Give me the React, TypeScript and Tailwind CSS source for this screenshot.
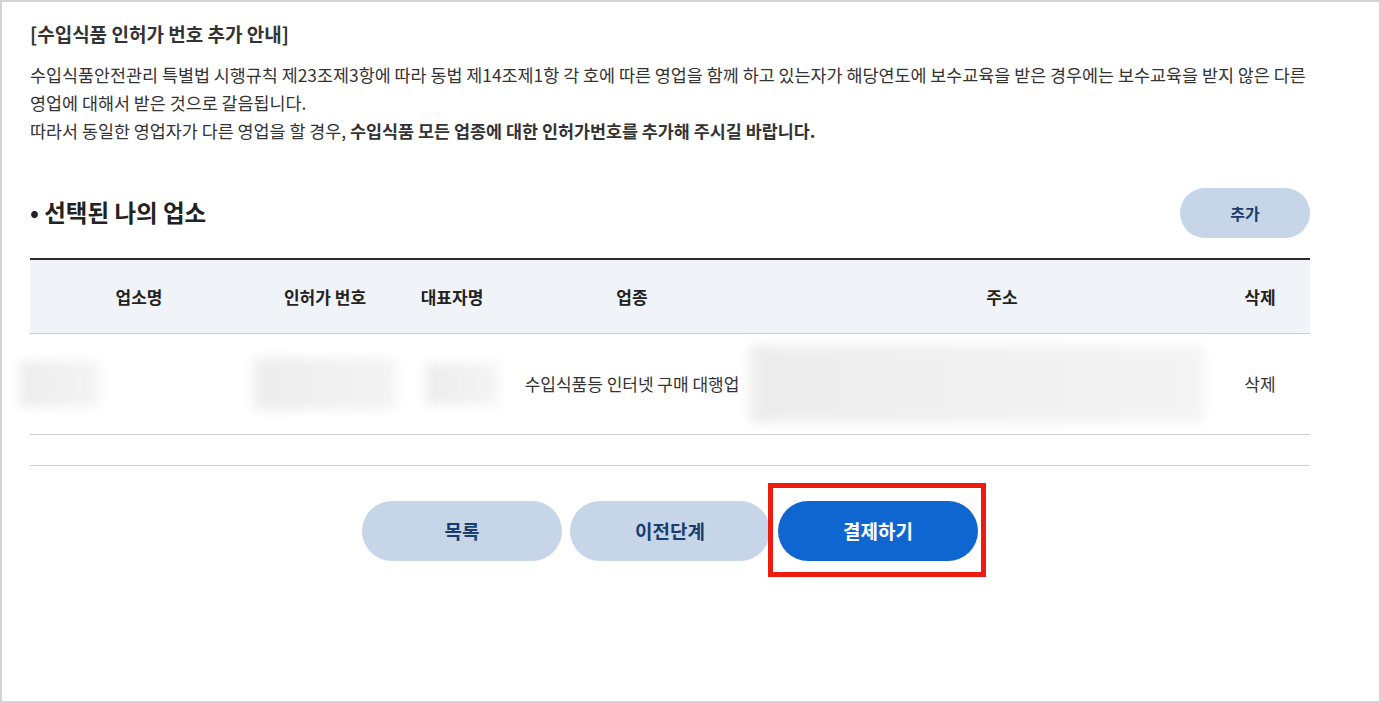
import React from "react";

const font = { fontFamily: '"Noto Sans CJK KR", "Noto Sans", sans-serif' };

function Blur({ className }: { className: string }) {
  return <div className={`bg-gradient-to-r from-[#ececec] via-[#f0f0f0] to-[#f4f4f4] blur-[6px] ${className}`} />;
}

export default function App() {
  return (
    <div
      className="w-[1381px] h-[703px] border-2 border-[#d4d4d4] bg-white text-[#333] overflow-hidden"
      style={font}
    >
      <div className="pl-[28px] w-[1308px] pt-[18px]">
        <h2 className="text-[19px] leading-[28px] font-bold text-[#333]">
          [수입식품 인허가 번호 추가 안내]
        </h2>
        <div className="mt-[13px] text-[17.4px] leading-[28px] text-[#333] break-keep">
          <p>
            수입식품안전관리 특별법 시행규칙 제23조제3항에 따라 동법 제14조제1항 각 호에 따른 영업을 함께 하고 있는자가 해당연도에 보수교육을 받은 경우에는 보수교육을 받지 않은 다른 영업에 대해서 받은 것으로 갈음됩니다.
          </p>
          <p>
            따라서 동일한 영업자가 다른 영업을 할 경우, <b className="font-bold">수입식품 모든 업종에 대한 인허가번호를 추가해 주시길 바랍니다.</b>
          </p>
        </div>

        <div className="mt-[43px] flex items-center justify-between">
          <h3 className="text-[23.5px] font-bold text-[#222] leading-[30px] -mt-[2px]">• 선택된 나의 업소</h3>
          <button className="w-[130px] h-[50px] rounded-full bg-[#c6d6e8] text-[#1b3d6d] text-[16px] font-bold">
            추가
          </button>
        </div>

        <div className="mt-[20px] w-[1280px] border-t-2 border-[#2b2b2b]">
          <div className="flex h-[74px] bg-[#f0f3f7] border-b border-[#cfcfcf] text-[17px] font-bold text-[#222]">
            <div className="w-[218px] flex items-center justify-center">업소명</div>
            <div className="w-[154px] flex items-center justify-center">인허가 번호</div>
            <div className="w-[100px] flex items-center justify-center">대표자명</div>
            <div className="w-[260px] flex items-center justify-center">업종</div>
            <div className="w-[480px] flex items-center justify-center">주소</div>
            <div className="w-[68px] pr-[32px] flex items-center justify-center">삭제</div>
          </div>
          <div className="flex h-[101px] border-b border-[#cfcfcf] text-[17px] text-[#333]">
            <div className="w-[218px] flex items-center">
              <Blur className="w-[80px] h-[46px] -ml-[10px]" />
            </div>
            <div className="w-[154px] flex items-center justify-center">
              <Blur className="w-[142px] h-[52px]" />
            </div>
            <div className="w-[100px] flex items-center justify-center">
              <Blur className="w-[72px] h-[42px] ml-[20px]" />
            </div>
            <div className="w-[260px] flex items-center justify-center">수입식품등 인터넷 구매 대행업</div>
            <div className="w-[480px] flex items-center">
              <Blur className="w-[454px] h-[76px] -ml-[12px]" />
            </div>
            <div className="w-[68px] pr-[32px] flex items-center justify-center">삭제</div>
          </div>
          <div className="h-[31px] border-b border-[#cfcfcf]" />
        </div>

        <div className="mt-[35px] w-[1280px] flex justify-center gap-[8px]">
          <button className="w-[200px] h-[60px] rounded-full bg-[#c6d6e8] text-[#1b3d6d] text-[19px] font-bold">
            목록
          </button>
          <button className="w-[200px] h-[60px] rounded-full bg-[#c6d6e8] text-[#1b3d6d] text-[19px] font-bold">
            이전단계
          </button>
          <div className="relative">
            <button className="w-[200px] h-[60px] rounded-full bg-[#0f66d0] text-white text-[19px] font-bold">
              결제하기
            </button>
            <div className="absolute -left-[10px] -top-[18px] w-[218px] h-[94px] border-[5px] border-[#ee1c0e] pointer-events-none" />
          </div>
        </div>
      </div>
    </div>
  );
}
